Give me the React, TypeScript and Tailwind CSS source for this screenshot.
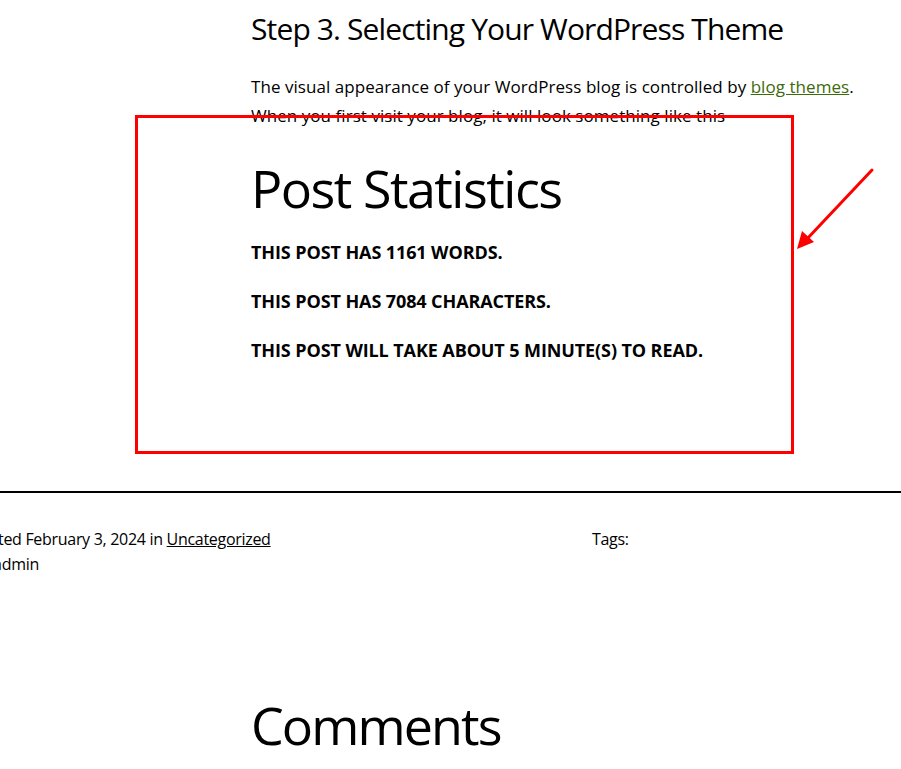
import React from "react";

export default function App() {
  return (
    <div
      className="relative w-[901px] h-[769px] overflow-hidden bg-white text-black"
      style={{ fontFamily: '"Open Sans", "Noto Sans", sans-serif' }}
    >
      <div className="pl-[251px] pr-[20px]">
        <h2 className="pt-[10px] text-[30px] leading-[38px] font-normal tracking-[-0.87px]">
          Step 3. Selecting Your WordPress Theme
        </h2>
        <p className="mt-[24px] text-[17px] leading-[29px] tracking-[0.05px] w-[630px]">
          The visual appearance of your WordPress blog is controlled by{" "}
          <a className="underline text-[#3d6a0c]">blog themes</a>.
          <br />
          When you first visit your blog, it will look something like this
        </p>
        <h2 className="mt-[26px] text-[52px] leading-[64px] font-normal tracking-[-1.5px]">
          Post Statistics
        </h2>
        <div className="mt-[20px] flex flex-col gap-[25px] text-[18px] leading-[24px] font-bold tracking-[-0.1px]">
          <p>THIS POST HAS 1161 WORDS.</p>
          <p>THIS POST HAS 7084 CHARACTERS.</p>
          <p>THIS POST WILL TAKE ABOUT 5 MINUTE(S) TO READ.</p>
        </div>
      </div>

      <div className="mt-[129px] h-[2px] bg-black w-full" />

      <div className="mt-[34px] flex text-[16px] leading-[25px] tracking-[-0.3px]">
        <div className="ml-[-28px] w-[620px]">
          <div>
            Posted February 3, 2024 in <a className="underline">Uncategorized</a>
          </div>
          <div>by admin</div>
        </div>
        <div>Tags:</div>
      </div>

      <div className="pl-[251px] mt-[116px]">
        <h2 className="text-[52px] leading-[64px] font-normal tracking-[-1.9px]">Comments</h2>
      </div>

      {/* annotation overlay */}
      <div className="absolute left-[135px] top-[115px] w-[659px] h-[339px] border-[3px] border-[#f00]" />
      <svg className="absolute left-0 top-0" width="901" height="769" viewBox="0 0 901 769">
        <line x1="872" y1="170" x2="806" y2="240" stroke="#f00" strokeWidth="3" strokeLinecap="round" />
        <polygon points="797,249 802,231 814,242" fill="#f00" />
      </svg>
    </div>
  );
}
